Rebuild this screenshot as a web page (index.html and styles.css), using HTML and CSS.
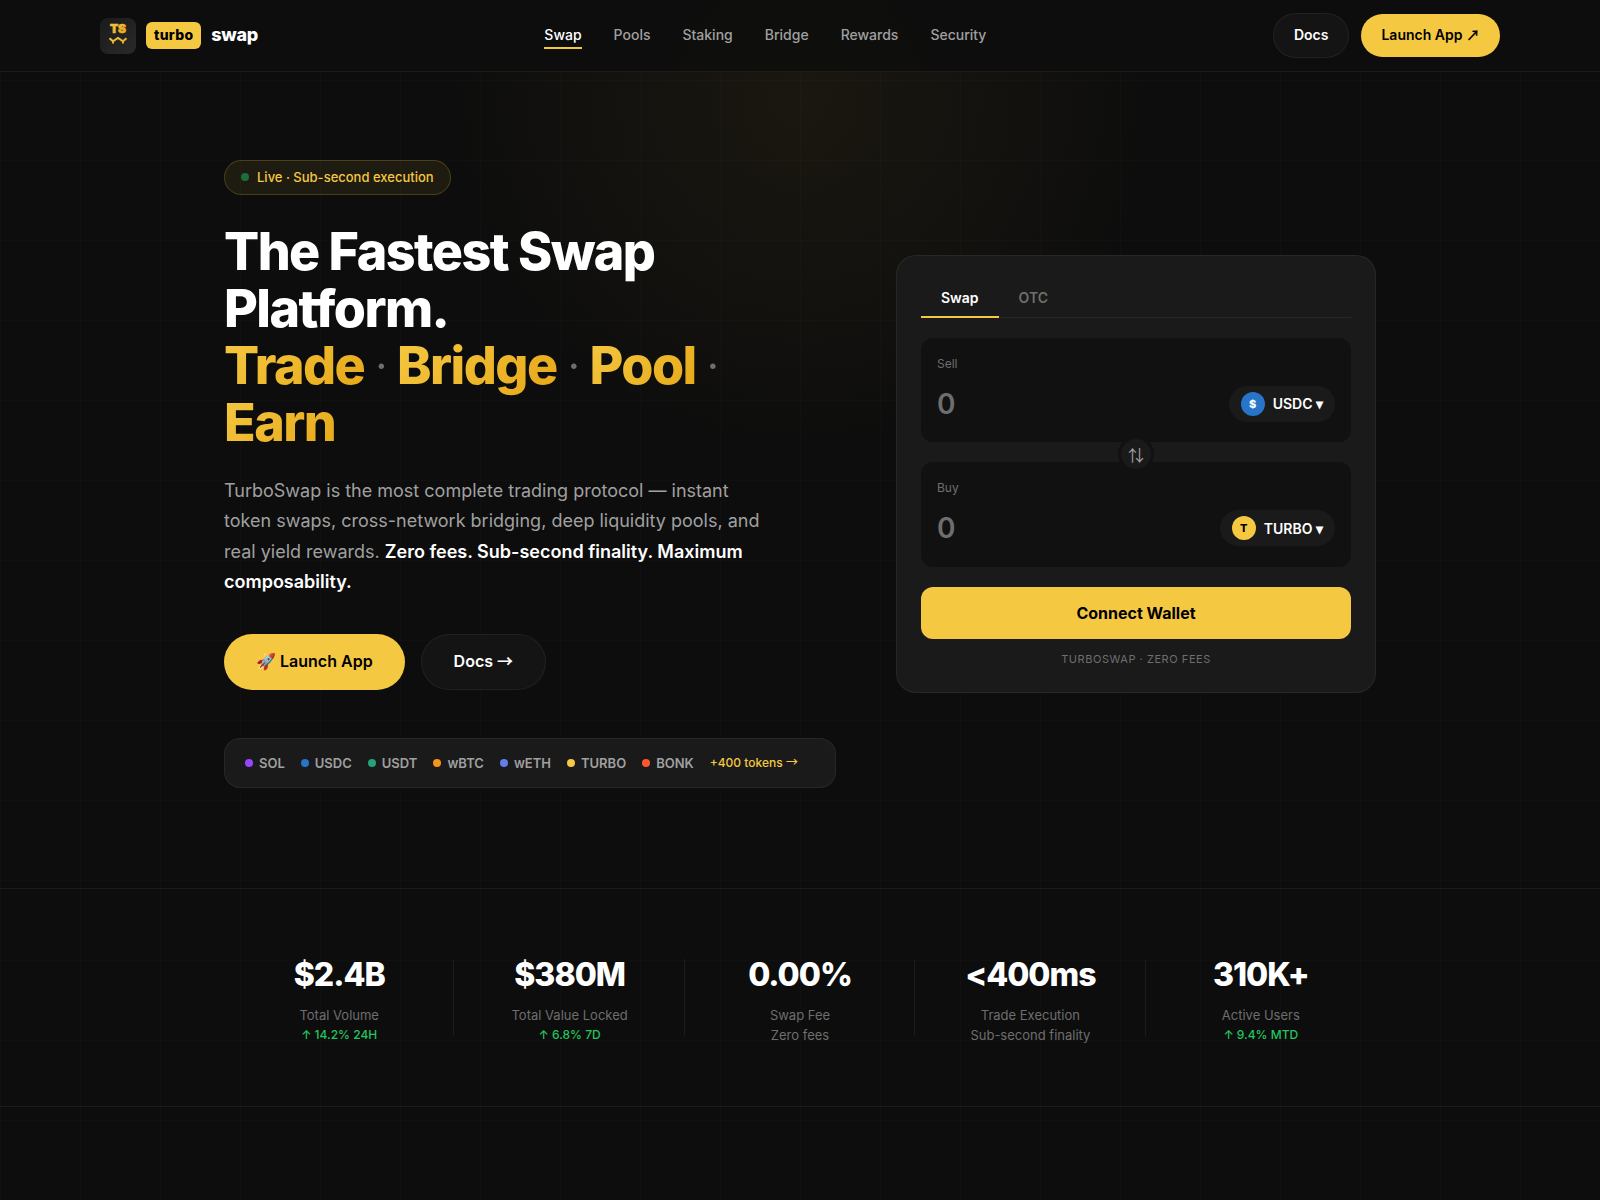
FILE: index.html
```html
<!DOCTYPE html>
<html lang="en">
<head>
    <meta charset="UTF-8">
    <meta name="viewport" content="width=device-width, initial-scale=1.0">
    <title>TurboSwap</title>
    <link rel="stylesheet" href="styles.css">
</head>
<body>
    <header class="navbar">
        <div class="nav-inner">
            <a href="#" class="logo">
                <svg class="logo-icon" viewBox="0 0 36 36" aria-hidden="true">
                    <defs>
                        <linearGradient id="logoBg" x1="0" y1="0" x2="1" y2="1">
                            <stop offset="0" stop-color="#1a1a1a"/>
                            <stop offset="1" stop-color="#2a2a2a"/>
                        </linearGradient>
                        <linearGradient id="logoGold" x1="0" y1="0" x2="1" y2="1">
                            <stop offset="0" stop-color="#f5c842"/>
                            <stop offset="1" stop-color="#e6a817"/>
                        </linearGradient>
                    </defs>
                    <rect width="36" height="36" rx="8" fill="url(#logoBg)"/>
                    <text class="logo-letters" x="18" y="15" text-anchor="middle" fill="url(#logoGold)" stroke="url(#logoGold)">TS</text>
                    <path d="M9.5 20.3 L13 23.3 L18 19.9 L23 23.3 L26.5 20.3 M13 22.5 V25.5 M23 22.5 V25.5" fill="none" stroke="url(#logoGold)" stroke-width="2"/>
                </svg>
                <span class="logo-tag">turbo</span>
                <span class="logo-text">swap</span>
            </a>
            <nav class="nav-links">
                <a href="#swap" class="active">Swap</a>
                <a href="#pools">Pools</a>
                <a href="#staking">Staking</a>
                <a href="#bridge">Bridge</a>
                <a href="#rewards">Rewards</a>
                <a href="#security">Security</a>
            </nav>
            <div class="nav-actions">
                <a href="#docs" class="btn btn-dark">Docs</a>
                <a href="#app" class="btn btn-gold">Launch App <span class="arrow">↗</span></a>
            </div>
        </div>
    </header>

    <main>
        <section class="hero">
            <div class="hero-text">
                <div class="badge"><span class="badge-dot"></span>Live · Sub-second execution</div>
                <h1>
                    The Fastest Swap Platform.<br>
                    <span class="gold">Trade</span> <span class="sep">·</span>
                    <span class="gold">Bridge</span> <span class="sep">·</span>
                    <span class="gold">Pool</span> <span class="sep">·</span>
                    <span class="gold">Earn</span>
                </h1>
                <p class="lead">TurboSwap is the most complete trading protocol — instant token swaps, cross-network bridging, deep liquidity pools, and real yield rewards. <strong>Zero fees. Sub-second finality. Maximum composability.</strong></p>
                <div class="hero-actions">
                    <a href="#app" class="btn btn-lg btn-gold">🚀 Launch App</a>
                    <a href="#docs" class="btn btn-lg btn-dark">Docs <span class="arrow">→</span></a>
                </div>
                <div class="tokens">
                    <span class="token"><i class="dot sol"></i>SOL</span>
                    <span class="token"><i class="dot usdc"></i>USDC</span>
                    <span class="token"><i class="dot usdt"></i>USDT</span>
                    <span class="token"><i class="dot wbtc"></i>wBTC</span>
                    <span class="token"><i class="dot weth"></i>wETH</span>
                    <span class="token"><i class="dot turbo"></i>TURBO</span>
                    <span class="token"><i class="dot bonk"></i>BONK</span>
                    <a href="#tokens" class="more">+400 tokens <span class="arrow">→</span></a>
                </div>
            </div>

            <div class="swap-card" id="swap">
                <div class="tabs">
                    <button type="button" class="tab active">Swap</button>
                    <button type="button" class="tab">OTC</button>
                </div>
                <div class="swap-box">
                    <label for="sell">Sell</label>
                    <div class="swap-row">
                        <input type="text" id="sell" placeholder="0" inputmode="decimal">
                        <button type="button" class="token-select"><span class="coin usdc">$</span>USDC ▾</button>
                    </div>
                </div>
                <button type="button" class="flip" aria-label="Switch tokens"><span class="arrow">⇅</span></button>
                <div class="swap-box">
                    <label for="buy">Buy</label>
                    <div class="swap-row">
                        <input type="text" id="buy" placeholder="0" inputmode="decimal">
                        <button type="button" class="token-select"><span class="coin turbo">T</span>TURBO ▾</button>
                    </div>
                </div>
                <button type="button" class="connect">Connect Wallet</button>
                <p class="card-note">TURBOSWAP · ZERO FEES</p>
            </div>
        </section>

        <section class="stats">
            <div class="stats-grid">
                <div class="stat">
                    <div class="stat-value">$2.4B</div>
                    <div class="stat-label">Total Volume</div>
                    <div class="stat-change">↑ 14.2% 24H</div>
                </div>
                <div class="stat">
                    <div class="stat-value">$380M</div>
                    <div class="stat-label">Total Value Locked</div>
                    <div class="stat-change">↑ 6.8% 7D</div>
                </div>
                <div class="stat">
                    <div class="stat-value">0.00%</div>
                    <div class="stat-label">Swap Fee</div>
                    <div class="stat-label">Zero fees</div>
                </div>
                <div class="stat">
                    <div class="stat-value">&lt;400ms</div>
                    <div class="stat-label">Trade Execution</div>
                    <div class="stat-label">Sub-second finality</div>
                </div>
                <div class="stat">
                    <div class="stat-value">310K+</div>
                    <div class="stat-label">Active Users</div>
                    <div class="stat-change">↑ 9.4% MTD</div>
                </div>
            </div>
        </section>
    </main>
</body>
</html>
```
FILE: styles.css
```css
:root {
    --bg: #0d0d0d;
    --card: #1a1a1a;
    --box: #111;
    --border: rgba(255, 255, 255, 0.06);
    --gold: #f5c842;
    --gold-dark: #e6a817;
    --text: #fff;
    --text-2: #a0a0a0;
    --text-3: #6e6e6e;
    --green: #22c55e;
}
* {
    margin: 0;
    padding: 0;
    box-sizing: border-box;
}
body {
    font-family: Inter, "Liberation Sans", sans-serif;
    line-height: 1.6;
    color: var(--text);
    background-color: var(--bg);
    /* glow behind the hero, under an 80px grid */
    background-image:
        linear-gradient(rgba(255, 255, 255, 0.012) 1px, transparent 1px),
        linear-gradient(90deg, rgba(255, 255, 255, 0.012) 1px, transparent 1px),
        radial-gradient(circle 360px at 50% 100px, rgba(245, 190, 66, 0.06), transparent);
    background-size: 80px 80px, 80px 80px, 100% 100%;
    min-height: 100vh;
}
a {
    color: inherit;
    text-decoration: none;
}
button,
input {
    font-family: inherit;
    color: inherit;
    border: none;
    background: none;
}
button {
    cursor: pointer;
}
.arrow {
    font-family: "Noto Sans CJK SC", sans-serif;
    line-height: 1;
}

/* Navbar */
.navbar {
    position: sticky;
    top: 0;
    z-index: 10;
    background: rgba(13, 13, 13, 0.9);
    border-bottom: 1px solid var(--border);
}
.nav-inner {
    display: flex;
    align-items: center;
    justify-content: space-between;
    max-width: 1400px;
    min-height: 71px;
    margin: 0 auto;
}
.logo {
    display: flex;
    align-items: center;
    gap: 10px;
}
.logo-icon {
    width: 36px;
    height: 36px;
}
.logo-letters {
    font-size: 12px;
    font-weight: 900;
    stroke-width: 0.6px;
}
.logo-tag {
    padding: 2px 8px;
    border-radius: 6px;
    background: var(--gold);
    color: #000;
    font-size: 14px;
    font-weight: 800;
    letter-spacing: 0.02em;
}
.logo-text {
    font-size: 18px;
    font-weight: 800;
    letter-spacing: -0.02em;
}
.nav-links {
    display: flex;
    gap: 32px;
    font-size: 14px;
    font-weight: 500;
    color: var(--text-2);
}
.nav-links a {
    border-top: 2px solid transparent;
    border-bottom: 2px solid transparent;
}
.nav-links a.active {
    color: var(--text);
    border-bottom-color: var(--gold);
}
.nav-actions {
    display: flex;
    align-items: center;
    gap: 12px;
}
.btn {
    padding: 10px 20px;
    border-radius: 28px;
    font-size: 14px;
    font-weight: 600;
}
.btn-lg {
    padding: 14px 32px;
    font-size: 16px;
}
.btn-gold {
    background: var(--gold);
    color: #000;
}
.btn-lg.btn-gold {
    padding: 15px 32px;
}
.btn-dark {
    background: #141414;
    border: 1px solid var(--border);
}

/* Hero */
.hero {
    display: grid;
    grid-template-columns: minmax(0, 1fr) 480px;
    align-items: center;
    gap: 60px;
    max-width: 1200px;
    margin: 0 auto;
    padding: 88px 24px 100px;
}
.badge {
    display: inline-flex;
    align-items: center;
    gap: 8px;
    padding: 6px 16px;
    margin-bottom: 28px;
    border: 1px solid rgba(245, 200, 66, 0.2);
    border-radius: 20px;
    background: rgba(245, 200, 66, 0.08);
    color: var(--gold);
    font-size: 13px;
    font-weight: 500;
}
.badge-dot {
    width: 8px;
    height: 8px;
    border-radius: 50%;
    background: #1b6e38;
}
h1 {
    margin-bottom: 24px;
    font-size: 52px;
    font-weight: 800;
    line-height: 1.1;
    letter-spacing: -0.03em;
}
.gold {
    background: linear-gradient(135deg, var(--gold), var(--gold-dark));
    -webkit-background-clip: text;
    background-clip: text;
    color: transparent;
}
.sep {
    color: var(--text-3);
    font-weight: 300;
}
.lead {
    max-width: 540px;
    margin-bottom: 36px;
    color: var(--text-2);
    font-size: 18px;
    line-height: 1.7;
}
.lead strong {
    color: var(--text);
    font-weight: 600;
}
.hero-actions {
    display: flex;
    gap: 16px;
    margin-bottom: 48px;
}
.tokens {
    display: flex;
    align-items: center;
    gap: 16px;
    padding: 14px 20px;
    border: 1px solid var(--border);
    border-radius: 16px;
    background: var(--card);
}
.token {
    display: flex;
    align-items: center;
    gap: 6px;
    color: var(--text-2);
    font-size: 13px;
    font-weight: 600;
}
.dot {
    width: 8px;
    height: 8px;
    border-radius: 50%;
}
.more {
    color: var(--gold);
    font-size: 12px;
    font-weight: 500;
}
.sol { background: #9945ff; }
.usdc { background: #2775ca; }
.usdt { background: #26a17b; }
.wbtc { background: #f7931a; }
.weth { background: #627eea; }
.turbo { background: var(--gold); }
.bonk { background: #ff5530; }

/* Swap card */
.swap-card {
    padding: 24px;
    border: 1px solid var(--border);
    border-radius: 20px;
    background: var(--card);
}
.tabs {
    display: flex;
    margin-bottom: 20px;
    border-bottom: 1px solid var(--border);
}
.tab {
    margin-bottom: -1px;
    padding: 10px 20px;
    border-bottom: 2px solid transparent;
    color: var(--text-3);
    font-size: 14px;
    font-weight: 600;
    line-height: 16px;
}
.tab.active {
    color: var(--text);
    border-color: var(--gold);
}
.swap-box {
    padding: 16px;
    border-radius: 12px;
    background: var(--box);
}
.swap-box label {
    display: block;
    margin-bottom: 8px;
    color: var(--text-3);
    font-size: 12px;
}
.swap-row {
    display: flex;
    align-items: center;
    justify-content: space-between;
}
.swap-row input {
    width: 50%;
    height: 45px;
    font-size: 28px;
    font-weight: 600;
    outline: none;
}
.swap-row input::placeholder {
    color: var(--text-3);
}
.token-select {
    display: flex;
    align-items: center;
    gap: 8px;
    padding: 6px 12px;
    border-radius: 20px;
    background: var(--card);
    font-size: 14px;
    font-weight: 600;
}
.coin {
    display: flex;
    align-items: center;
    justify-content: center;
    width: 24px;
    height: 24px;
    border-radius: 50%;
    font-size: 11px;
    font-weight: 800;
}
.coin.turbo {
    color: #000;
}
.flip {
    display: flex;
    align-items: center;
    justify-content: center;
    position: relative;
    width: 36px;
    height: 36px;
    margin: -6px auto -10px;
    border: 3px solid var(--box);
    border-radius: 50%;
    background: var(--card);
    color: var(--text-2);
    font-size: 16px;
}
.connect {
    width: 100%;
    margin-top: 20px;
    padding: 16px;
    border-radius: 12px;
    background: var(--gold);
    color: #000;
    font-size: 16px;
    font-weight: 700;
    line-height: 20px;
}
.card-note {
    margin-top: 12px;
    color: var(--text-3);
    font-size: 11px;
    letter-spacing: 0.05em;
    text-align: center;
}

/* Stats */
.stats {
    padding: 60px 24px;
    border-top: 1px solid var(--border);
    border-bottom: 1px solid var(--border);
}
.stats-grid {
    display: grid;
    grid-template-columns: repeat(5, 1fr);
    max-width: 1152px;
    margin: 0 auto;
}
.stat {
    position: relative;
    text-align: center;
}
.stat:not(:last-child)::after {
    content: "";
    position: absolute;
    top: 10%;
    right: 0;
    width: 1px;
    height: 80%;
    background: var(--border);
}
.stat-value {
    margin-bottom: 4px;
    font-size: 32px;
    font-weight: 800;
    letter-spacing: -1px;
}
.stat-label {
    color: var(--text-3);
    font-size: 13px;
}
.stat-change {
    color: var(--green);
    font-size: 12px;
    font-weight: 500;
}
```
